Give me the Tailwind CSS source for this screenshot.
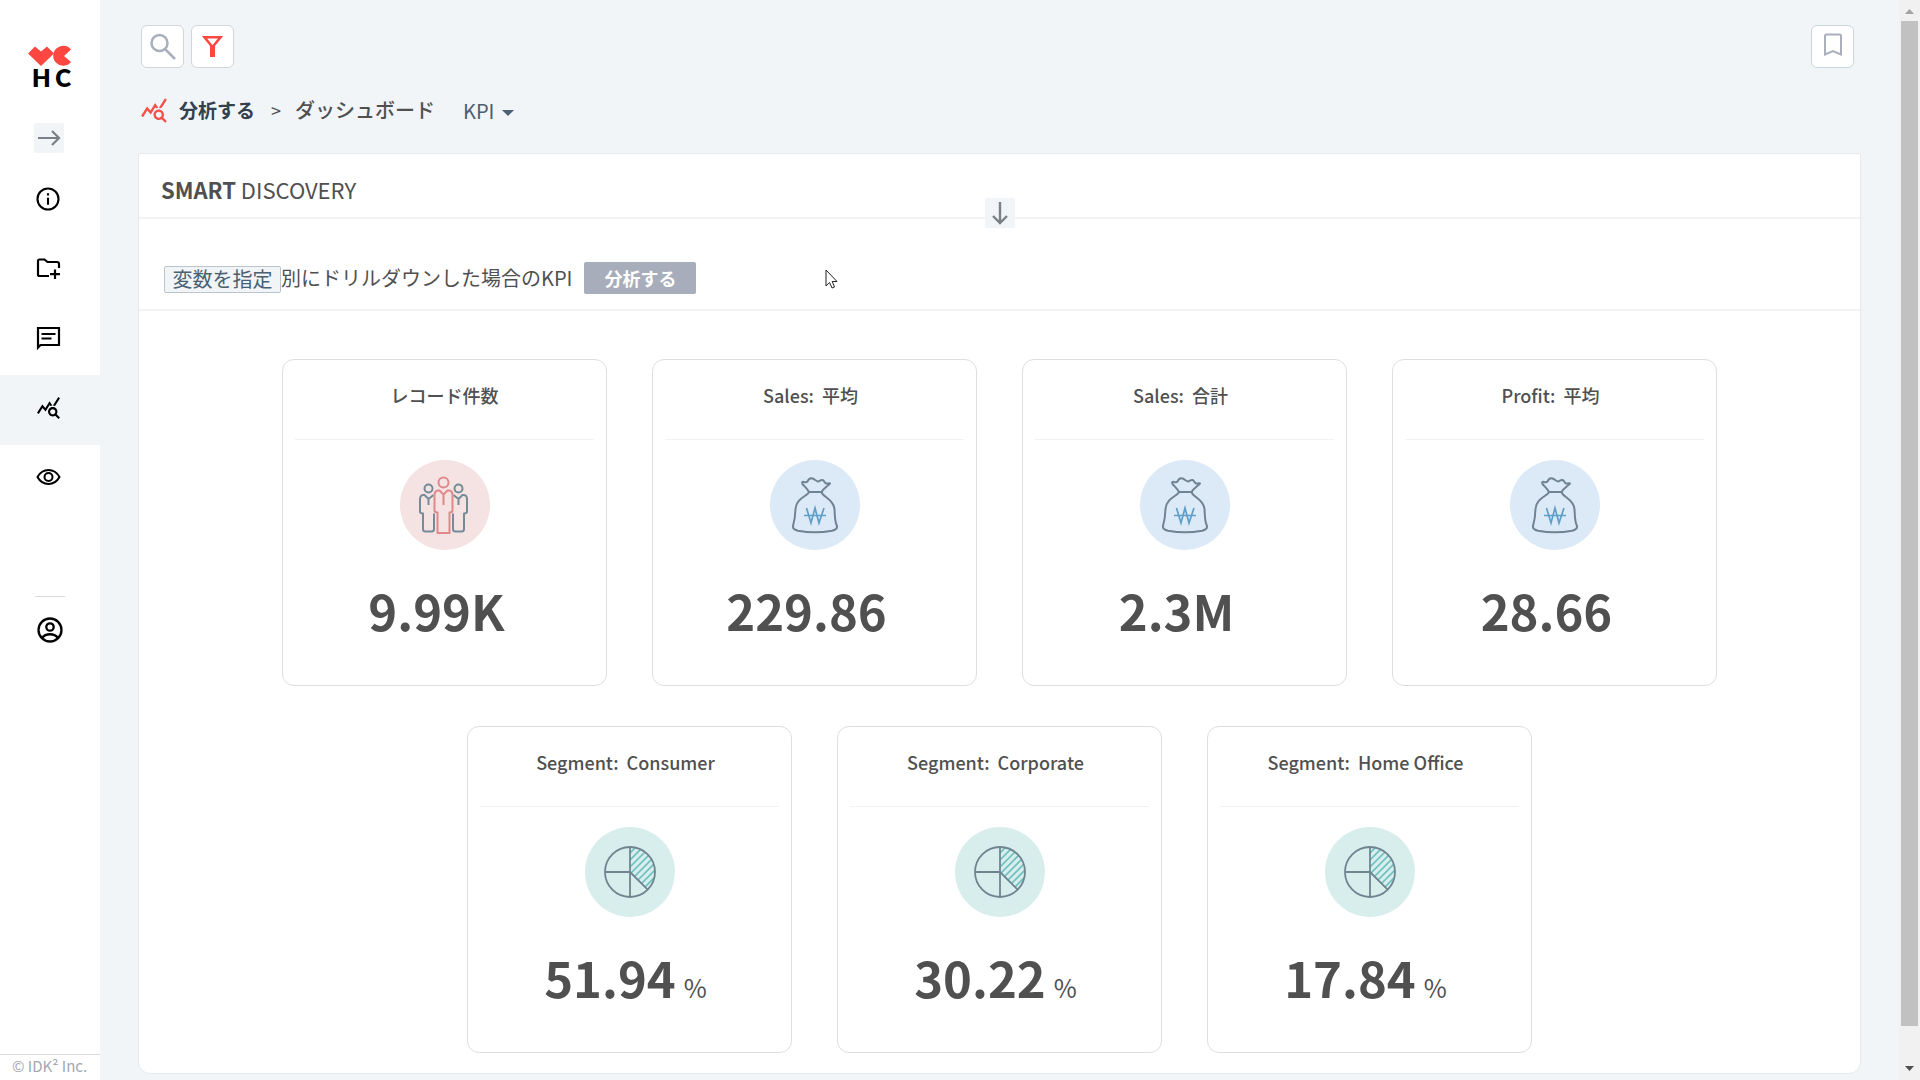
<!DOCTYPE html>
<html lang="ja">
<head>
    <meta charset="UTF-8">
    <meta name="viewport" content="width=device-width, initial-scale=1.0">
    <title>KPI - ダッシュボード</title>
    <script src="https://cdn.jsdelivr.net/npm/@tailwindcss/browser@4"></script>
</head>
<body class="flex h-screen overflow-hidden bg-[#f1f5f8] font-['Noto_Sans_CJK_JP',sans-serif] text-[#505050]">
    <svg class="hidden">
        <symbol id="icon-stats" viewBox="0 0 24 24">
            <path d="M19.88 18.47c.44-.7.7-1.51.7-2.39 0-2.49-2.01-4.5-4.5-4.5s-4.5 2.01-4.5 4.5 2.01 4.5 4.49 4.5c.88 0 1.7-.26 2.39-.7L21.58 23 23 21.58l-3.12-3.11zm-3.8.11c-1.38 0-2.5-1.12-2.5-2.5s1.12-2.5 2.5-2.5 2.5 1.12 2.5 2.5-1.12 2.5-2.5 2.5zm-.36-8.5c-.74.02-1.45.18-2.1.45l-.55-.83-3.8 6.18-3.01-3.52-3.63 5.81L1 17l5-8 3 3.5L13 6l2.72 4.08zm2.59.5c-.64-.28-1.33-.45-2.05-.49L21.38 2 23 3.18l-4.69 7.4z"/>
        </symbol>
        <symbol id="icon-people" viewBox="0 0 90 90">
            <g fill="none" stroke="#748c98" stroke-width="2" stroke-linejoin="round">
                <circle cx="28.5" cy="28.5" r="4"/>
                <path d="M28.5 45v-6l-4-4c-3-.5-4.500 1-4.500 4v12.500c0 1.500 1 2 3 2V69c0 1.500 1 2.500 2.500 2.500h6c1.500 0 2.500-1 2.500-2.500V53.500M28.500 39l5-4"/>
                <circle cx="58.5" cy="28.5" r="4"/>
                <path d="M58.500 45v-6l4-4c3-.5 4.500 1 4.500 4v12.500c0 1.500-1 2-3 2V69c0 1.500-1 2.500-2.500 2.500h-6c-1.500 0-2.500-1-2.500-2.500V53.500M58.500 39l-5-4"/>
            </g>
            <g fill="none" stroke="#e08989" stroke-width="2" stroke-linejoin="round">
                <circle cx="43.5" cy="22.5" r="5"/>
                <path d="M43.500 45V34.500l-4-4c-3.500-.5-5 1.500-5 4.500v15.500c0 1.500 1 2 3 2V73h12V52.500c2 0 3-.5 3-2V35c0-3-1.500-5-5-4.500l-4 4"/>
            </g>
        </symbol>
        <symbol id="icon-money" viewBox="0 0 90 90">
            <g fill="none" stroke="#6f8490" stroke-width="2" stroke-linecap="round" stroke-linejoin="round">
                <path d="M39 32c-1.500-3-4-5-6.500-8-1-1.500 0-2.500 1.500-2 1.500.3 2.500.5 3.500-.5 1-2.500 3-3.500 5-3 2 .6 3.500 2.500 5.500 3 1.500-.5 3-2 4.500-1.500 2 .7 2 3 3.500 3.500 1 .2 3-.5 4 0-1.500 2-6 4.500-8.500 8.500"/>
                <path d="M39 32h13"/>
                <path d="M39 32c-1 4-13 6-13.500 17-.3 9-1 12-2.500 17-.5 3 2 4 5 4.700 11 2 23 2 34 0 3-.7 5.500-1.700 5-4.700-2.500-5-2-10-2.500-17-1-10-12-12-13-17"/>
            </g>
            <path d="M36.500 48l4.500 15 4-15 4 15 5-15M34 55.500h22" fill="none" stroke="#5e9fc9" stroke-width="1.700"/>
        </symbol>
        <symbol id="icon-pie" viewBox="0 0 90 90">
            <path d="M45 26L50.4 20.6M45 33L55.6 22.4M45 40L60 25M46 46L63.6 28.4M49.5 49.5L66.6 32.4M53 53L68.8 37.2M56.5 56.5L69.9 43.1M60 60L69.3 50.7" stroke="#6dbfc0" stroke-width="1.700"/>
            <g fill="none" stroke="#6f8490" stroke-width="1.800">
                <circle cx="45" cy="45" r="25"/>
                <path d="M45 20v50M20 45h25l17.700 17.700"/>
            </g>
        </symbol>
    </svg>

    <!-- サイドバー -->
    <aside class="flex w-[100px] shrink-0 flex-col bg-white">
        <a href="#" aria-label="HC" class="mt-[45px] ml-7 flex h-11 w-11 flex-col">
            <svg class="h-[21px] w-11 shrink-0" viewBox="0 0 44 21" fill="#ff4742">
                <path d="M0 8.500L7 1.500l6 5 6-5 7 7L13 21z"/>
                <path d="M43 4.500A10 10 0 1 0 43 17l-7-6z"/>
            </svg>
            <span class="flex justify-between pr-px pl-1 font-[Lato] text-2xl leading-6 font-extrabold text-black"><span>H</span><span>C</span></span>
        </a>
        <button aria-label="メニューを開く" class="mt-[34px] ml-[34px] flex h-[30px] w-[30px] items-center justify-center rounded-xs bg-[#f1f5f8]">
            <svg class="h-6 w-6" viewBox="0 0 24 24" fill="none" stroke="#7b8086" stroke-width="2.200"><path d="M1 12h21M15 5l7 7-7 7"/></svg>
        </button>
        <nav class="mt-3 flex flex-col">
            <a href="#" aria-label="情報" class="flex h-[70px] items-center pb-[2px] pl-[34px]">
                <svg class="h-7 w-7" viewBox="0 0 24 24"><circle cx="12" cy="12" r="9" fill="none" stroke="#000" stroke-width="1.800"/><path d="M11.100 7h1.800v2h-1.800zM11.100 11h1.800v6h-1.800z"/></svg>
            </a>
            <a href="#" aria-label="フォルダ追加" class="flex h-[70px] items-center pb-1 pl-[34px]">
                <svg class="h-7 w-7" viewBox="0 0 28 28" fill="none" stroke="#000" stroke-width="2.200"><path d="M15 22H5.500q-1.500 0-1.500-1.500V7q0-1.500 1.500-1.500h5l3 2.500h9.500q2 0 2 2v4M21 15.500v9.500M16 20.200h10"/></svg>
            </a>
            <a href="#" aria-label="コメント" class="flex h-[70px] items-center pb-1 pl-[34px]">
                <svg class="h-7 w-7" viewBox="0 0 28 28" fill="none" stroke="#000" stroke-width="2.200"><path d="M4 23.500V4h21v17H6.500z"/><path d="M7.500 10h14M7.500 14.500h10"/></svg>
            </a>
            <a href="#" aria-label="分析する" aria-current="page" class="flex h-[70px] items-center bg-[#f1f5f8] pb-[6px] pl-9">
                <svg class="h-[25px] w-[25px]"><use href="#icon-stats"/></svg>
            </a>
            <a href="#" aria-label="表示" class="flex h-[70px] items-center pb-[6px] pl-[34px]">
                <svg class="h-7 w-7" viewBox="0 0 28 28" fill="none" stroke="#000" stroke-width="2"><path d="M3.500 14C6 9.500 10 7 14.500 7S23 9.500 25.500 14C23 18.500 19 21 14.500 21S6 18.500 3.500 14z"/><circle cx="14.500" cy="14" r="4"/></svg>
            </a>
        </nav>
        <hr class="mx-[35px] mt-[81px] border-[#d8dcdc]">
        <a href="#" aria-label="アカウント" class="mt-[18px] ml-[35px] h-[30px] w-[30px]">
            <svg class="h-[30px] w-[30px]" viewBox="0 0 30 30" fill="none" stroke="#000" stroke-width="2.300"><circle cx="15" cy="15" r="11.500"/><circle cx="15" cy="12" r="3.700"/><path d="M7 23c4-5 12-5 16 0"/></svg>
        </a>
        <footer class="mt-auto border-t border-[#d8dcdc] pb-1 pl-3 text-[15px] leading-[21px] text-[#a3a8b0]">© IDK² Inc.</footer>
    </aside>

    <main class="flex min-w-0 flex-1 flex-col px-[38px]">
        <div class="mt-[25px] mr-[7px] ml-[3px] flex gap-[7px]">
            <button aria-label="検索" class="flex h-[43px] w-[43px] items-center justify-center rounded-md border border-[#d0d6da] bg-white">
                <svg class="h-7 w-7" viewBox="0 0 28 28" fill="none" stroke="#a9afbc" stroke-width="2.500"><circle cx="10.500" cy="10" r="8"/><path d="M16 16l10 10"/></svg>
            </button>
            <button aria-label="フィルター" class="flex h-[43px] w-[43px] items-center justify-center rounded-md border border-[#d0d6da] bg-white">
                <svg class="h-6 w-6" viewBox="0 0 24 24" fill="none" stroke="#ff4742" stroke-width="2.500"><path d="M3.500 2.300h16L11.500 12z"/><path d="M11.500 10.500v11.500" stroke-width="5"/></svg>
            </button>
            <button aria-label="ブックマーク" class="ml-auto flex h-[43px] w-[43px] items-center justify-center rounded-md border border-[#cbd6da] bg-white pb-[6px]">
                <svg class="h-6 w-6" viewBox="0 0 24 24" fill="none" stroke="#a9afbc" stroke-width="2"><path d="M4 22.500V4q0-1.500 1.500-1.500h13q1.500 0 1.500 1.500v18.500L12 19z"/></svg>
            </button>
        </div>

        <nav class="mt-[27px] ml-[2px] flex h-[30px] items-center text-xl font-medium">
            <svg class="h-7 w-7 fill-[#f4504a]"><use href="#icon-stats"/></svg>
            <a href="#" class="ml-[11px] text-[19px] font-bold text-[#33404d]">分析する</a>
            <span class="mr-[14px] ml-4 text-lg font-normal">&gt;</span>
            <a href="#">ダッシュボード</a>
            <button class="mt-[2px] ml-7 flex items-center gap-2 font-normal text-[#4b6072]">KPI
                <svg class="mt-1 h-[6px] w-3 fill-current" viewBox="0 0 12 6"><path d="M0 0h12L6 6z"/></svg>
            </button>
        </nav>

        <section class="mt-[28px] flex flex-col rounded-t-xs rounded-b-xl border border-[#e6eaed] bg-white">
            <div class="relative h-[65px] border-b-2 border-[#f2f2f2] pl-[22px]">
                <h1 class="pt-[15px] text-[22px] leading-10 font-normal"><b class="font-bold">SMART</b> DISCOVERY</h1>
                <button aria-label="下へ" class="absolute -bottom-[11px] left-1/2 flex h-[30px] w-[30px] -translate-x-1/2 items-center justify-center rounded-xs bg-[#f1f5f8]">
                    <svg class="h-6 w-6" viewBox="0 0 24 24" fill="none" stroke="#7b8086" stroke-width="2.400"><path d="M12 1v20M5 15l7 7 7-7"/></svg>
                </button>
            </div>
            <div class="flex h-[92px] items-end border-b-2 border-[#f2f2f2] pb-[15px] pl-[25px] text-xl">
                <div class="flex h-8 items-center">
                    <button class="mt-[2px] h-[27px] w-[117px] rounded-xs border border-[#bac4ca] bg-[#f1f5f8] leading-6 text-[#4b6072]">変数を指定</button>
                    <span>別にドリルダウンした場合のKPI</span>
                    <button class="ml-3 h-8 w-28 rounded-xs bg-[#a7adba] text-lg leading-8 font-bold text-white">分析する</button>
                </div>
            </div>
            <div id="cards" class="mt-12 mb-5 flex flex-wrap justify-center gap-x-[45px] gap-y-10 px-[100px]"></div>
        </section>
    </main>

    <!-- スクロールバー -->
    <div class="flex w-[21px] shrink-0 flex-col items-center justify-between bg-[#f1f1f1] py-[9px]">
        <svg class="h-[5px] w-[9px] fill-[#a3a3a3]" viewBox="0 0 9 5"><path d="M0 5h9L4.500 0z"/></svg>
        <div class="mt-[7px] mb-[40px] w-[17px] flex-1 bg-[#c1c1c1]"></div>
        <svg class="h-[5px] w-[9px] fill-[#505050]" viewBox="0 0 9 5"><path d="M0 0h9L4.500 5z"/></svg>
    </div>

    <!-- マウスカーソル -->
    <svg class="absolute top-[269px] left-[825px] h-5 w-[13px]" viewBox="0 0 13 20" fill="#fff" stroke="#222"><path d="M1 1v16l3.500-3.500L7 19l2.500-1-2.300-5.500H12z"/></svg>

    <script>
    const kpis = [
        { titulo: 'レコード件数', valor: '9.99K', icono: 'people' },
        { titulo: 'Sales:', detalle: '平均', valor: '229.86', icono: 'money' },
        { titulo: 'Sales:', detalle: '合計', valor: '2.3M', icono: 'money' },
        { titulo: 'Profit:', detalle: '平均', valor: '28.66', icono: 'money' },
        { titulo: 'Segment:', detalle: 'Consumer', valor: '51.94', unidad: '%', icono: 'pie' },
        { titulo: 'Segment:', detalle: 'Corporate', valor: '30.22', unidad: '%', icono: 'pie' },
        { titulo: 'Segment:', detalle: 'Home Office', valor: '17.84', unidad: '%', icono: 'pie' }
    ];
    const fondos = { people: 'bg-[#f5e2e3]', money: 'bg-[#dce9f6]', pie: 'bg-[#d7eeed]' };

    document.getElementById('cards').innerHTML = kpis.map(k => `
        <article class="flex h-[327px] w-[325px] flex-col items-center rounded-xl border border-[#dedede] px-3">
            <h2 class="h-[79px] pt-[21px] text-lg leading-7 font-medium">${k.titulo}${k.detalle ? `<span class="mx-2">${k.detalle}</span>` : ''}</h2>
            <hr class="w-full border-[#f2f2f2]">
            <svg class="mt-5 h-[90px] w-[90px] shrink-0 rounded-full ${fondos[k.icono]}"><use href="#icon-${k.icono}"/></svg>
            <p class="mt-[25px] flex items-baseline pr-2 leading-[70px]">
                <span class="text-[49px] font-bold">${k.valor}</span>
                <span class="ml-2 text-[25px]">${k.unidad || ''}</span>
            </p>
        </article>`).join('');
    </script>
</body>
</html>
